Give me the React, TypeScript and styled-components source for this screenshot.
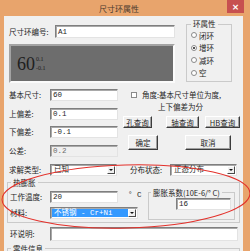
import React from "react";
import styled, { createGlobalStyle } from "styled-components";

const GlobalStyle = createGlobalStyle`
  html, body {
    margin: 0;
    padding: 0;
    background: #ffffff;
  }
  body {
    font-family: "Noto Sans CJK SC", "Noto Sans", sans-serif;
  }
`;

const Window = styled.div`
  position: relative;
  width: 250px;
  height: 251px;
  overflow: hidden;
  background: #e8a46c;
  display: flex;
  flex-direction: column;
`;

const TitleBar = styled.div`
  flex: none;
  height: 16px;
  display: flex;
  align-items: flex-start;
`;

const Title = styled.div`
  flex: 1;
  padding-left: 11px;
  text-align: center;
  font-size: 8px;
  line-height: 17px;
  color: #4a3a2e;
`;

const CloseButton = styled.div`
  width: 17px;
  height: 13px;
  margin-right: 6px;
  background: #c75050;
  color: #ffffff;
  display: flex;
  align-items: center;
  justify-content: center;
  font-family: "DejaVu Sans", sans-serif;
  font-size: 9px;
  font-weight: bold;
`;

const Client = styled.div`
  flex: 1;
  margin: 0 7px 0 4px;
  background: #f0f0f0;
  font-size: 7.5px;
  color: #1e1e1e;
  display: flex;
  flex-direction: column;
`;

const TopRow = styled.div`
  display: flex;
  align-items: flex-start;
  padding-left: 5px;
  gap: 11px;
`;

const Column = styled.div<{ $w: number }>`
  width: ${(p) => p.$w}px;
  flex: none;
  display: flex;
  flex-direction: column;
`;

const FieldRow = styled.div<{ $h?: number; $mt?: number }>`
  display: flex;
  align-items: center;
  height: ${(p) => p.$h ?? 12}px;
  margin-top: ${(p) => p.$mt ?? 0}px;
  flex: none;
`;

const Label = styled.div<{ $w: number; $ml?: number }>`
  width: ${(p) => p.$w}px;
  margin-left: ${(p) => p.$ml ?? 0}px;
  flex: none;
  white-space: nowrap;
  line-height: 10px;
`;

const TextBox = styled.div<{ $w: number; $h?: number; $off?: boolean; $ml?: number }>`
  box-sizing: border-box;
  width: ${(p) => p.$w}px;
  height: ${(p) => p.$h ?? 12}px;
  margin-left: ${(p) => p.$ml ?? 0}px;
  flex: none;
  border: 1px solid;
  border-color: #7f7f7f #e3e3e3 #e3e3e3 #7f7f7f;
  box-shadow: inset 1px 1px 0 #a9a9a9;
  background: ${(p) => (p.$off ? "#f0f0f0" : "#ffffff")};
  color: ${(p) => (p.$off ? "#6d6d6d" : "#1e1e1e")};
  font-family: "Liberation Mono", "Noto Sans CJK SC", monospace;
  font-size: 7.5px;
  line-height: ${(p) => (p.$h ?? 12) - 3}px;
  padding: 1px 0 0 2px;
  white-space: nowrap;
  overflow: hidden;
`;

const DisplayPanel = styled.div`
  box-sizing: border-box;
  margin-top: 6px;
  height: 39px;
  border: 2px solid;
  border-color: #a3a3a3 #fbfbfb #fbfbfb #a3a3a3;
  background: #6d6d6d;
  display: flex;
  align-items: center;
  padding: 1px 0 0 6px;
  font-family: "Liberation Serif", serif;
  color: #202020;
`;

const Nominal = styled.span`
  font-size: 18px;
  line-height: 1;
`;

const TolStack = styled.span`
  display: flex;
  flex-direction: column;
  margin-left: 1px;
  font-size: 6px;
  line-height: 9.5px;
`;

const Group = styled.fieldset<{ $w: number; $h: number; $ml?: number; $mt?: number; $pl?: number }>`
  box-sizing: border-box;
  width: ${(p) => p.$w}px;
  height: ${(p) => p.$h}px;
  margin: ${(p) => p.$mt ?? 0}px 0 0 ${(p) => p.$ml ?? 0}px;
  padding: 0 0 0 ${(p) => p.$pl ?? 0}px;
  border: 1px solid #cacaca;
  flex: none;
  min-width: 0;
`;

const Legend = styled.legend<{ $ml?: number }>`
  margin-left: ${(p) => p.$ml ?? 0}px;
  padding: 0 2px;
  font-size: 7.5px;
  line-height: 10px;
  white-space: nowrap;
`;

const RadioRow = styled.div`
  display: flex;
  align-items: center;
  height: 12.5px;
  gap: 2px;
`;

const RadioDot = styled.span<{ $on?: boolean }>`
  box-sizing: border-box;
  width: 6px;
  height: 6px;
  border-radius: 50%;
  border: 1px solid #8a8a8a;
  background: #ffffff;
  display: flex;
  align-items: center;
  justify-content: center;
  &::after {
    content: "";
    width: 2px;
    height: 2px;
    border-radius: 50%;
    background: ${(p) => (p.$on ? "#1a1a1a" : "transparent")};
  }
`;

const MidRow = styled.div`
  display: flex;
  align-items: flex-start;
  margin-top: 6px;
  padding-left: 5px;
  gap: 5px;
`;

const FieldStack = styled.div`
  width: 109px;
  display: flex;
  flex-direction: column;
  gap: 6.67px;
`;

const CheckLine = styled.div`
  display: flex;
  align-items: flex-start;
  padding-left: 8px;
  gap: 5px;
`;

const CheckBox = styled.span`
  box-sizing: border-box;
  width: 6px;
  height: 6px;
  margin-top: 3px;
  border: 1px solid #8a8a8a;
  background: #ffffff;
  flex: none;
`;

const CheckText = styled.div`
  line-height: 12px;
  white-space: nowrap;
`;

const Indent = styled.div<{ $pl: number }>`
  padding-left: ${(p) => p.$pl}px;
`;

const ButtonRow = styled.div<{ $mt: number }>`
  display: flex;
  margin-top: ${(p) => p.$mt}px;
`;

const Button = styled.div<{ $w: number; $ml?: number; $h?: number }>`
  box-sizing: border-box;
  width: ${(p) => p.$w}px;
  height: ${(p) => p.$h ?? 12}px;
  margin-left: ${(p) => p.$ml ?? 0}px;
  border: 1px solid;
  border-color: #ffffff #3c3c3c #3c3c3c #ffffff;
  box-shadow: inset -1px -1px 0 #a0a0a0;
  background: #f0f0f0;
  display: flex;
  align-items: center;
  justify-content: center;
  white-space: nowrap;
  font-size: 7.5px;
`;

const SelectBox = styled.div<{ $w: number; $h?: number; $ml?: number }>`
  box-sizing: border-box;
  width: ${(p) => p.$w}px;
  height: ${(p) => p.$h ?? 12}px;
  margin-left: ${(p) => p.$ml ?? 0}px;
  flex: none;
  display: flex;
  border: 1px solid;
  border-color: #7f7f7f #e3e3e3 #e3e3e3 #7f7f7f;
  box-shadow: inset 1px 1px 0 #a9a9a9;
  background: #ffffff;
  padding: 1px;
`;

const SelectText = styled.div<{ $hl?: boolean }>`
  flex: 1;
  min-width: 0;
  display: flex;
  align-items: center;
  padding-left: 2px;
  white-space: nowrap;
  font-family: "Liberation Mono", "Noto Sans CJK SC", monospace;
  font-size: 7.5px;
  line-height: 8px;
  background: ${(p) => (p.$hl ? "#3399ff" : "transparent")};
  color: ${(p) => (p.$hl ? "#ffffff" : "#1e1e1e")};
`;

const DropButton = styled.div`
  box-sizing: border-box;
  width: 8px;
  flex: none;
  border: 1px solid;
  border-color: #ffffff #4a4a4a #4a4a4a #ffffff;
  background: #f0f0f0;
  display: flex;
  align-items: center;
  justify-content: center;
  &::after {
    content: "";
    border-left: 2px solid transparent;
    border-right: 2px solid transparent;
    border-top: 2px solid #111111;
  }
`;

const Unit = styled.div<{ $ml: number }>`
  margin-left: ${(p) => p.$ml}px;
  margin-top: -4px;
  font-family: "Liberation Mono", monospace;
  font-size: 7.5px;
  white-space: nowrap;
`;

const GroupBody = styled.div`
  display: flex;
  align-items: flex-start;
`;

const Overlay = styled.svg`
  position: absolute;
  left: 0;
  top: 0;
  pointer-events: none;
`;

const Combo: React.FC<{ w: number; h?: number; ml?: number; text: string; hl?: boolean }> = ({
  w,
  h,
  ml,
  text,
  hl,
}) => (
  <SelectBox $w={w} $h={h} $ml={ml}>
    <SelectText $hl={hl}>{text}</SelectText>
    <DropButton />
  </SelectBox>
);

const App: React.FC = () => {
  const rings = [
    { name: "闭环", on: false },
    { name: "增环", on: true },
    { name: "减环", on: false },
    { name: "空", on: false },
  ];

  return (
    <>
      <GlobalStyle />
      <Window>
        <TitleBar>
          <Title>尺寸环属性</Title>
          <CloseButton>×</CloseButton>
        </TitleBar>
        <Client>
          <TopRow>
            <Column $w={166}>
              <FieldRow $h={13} $mt={9}>
                <Label $w={46}>尺寸环编号:</Label>
                <TextBox $w={120} $h={13}>A1</TextBox>
              </FieldRow>
              <DisplayPanel>
                <Nominal>60</Nominal>
                <TolStack>
                  <span>0.1</span>
                  <span>-0.1</span>
                </TolStack>
              </DisplayPanel>
            </Column>
            <Group $w={46} $h={63} $mt={3} $pl={4}>
              <Legend>环属性</Legend>
              {rings.map((r) => (
                <RadioRow key={r.name}>
                  <RadioDot $on={r.on} />
                  {r.name}
                </RadioRow>
              ))}
            </Group>
          </TopRow>

          <MidRow>
            <FieldStack>
              <FieldRow>
                <Label $w={41}>基本尺寸:</Label>
                <TextBox $w={68}>60</TextBox>
              </FieldRow>
              <FieldRow>
                <Label $w={41}>上偏差:</Label>
                <TextBox $w={68}>0.1</TextBox>
              </FieldRow>
              <FieldRow>
                <Label $w={41}>下偏差:</Label>
                <TextBox $w={68}>-0.1</TextBox>
              </FieldRow>
              <FieldRow>
                <Label $w={41}>公差:</Label>
                <TextBox $w={68} $off>
                  0.2
                </TextBox>
              </FieldRow>
            </FieldStack>
            <Column $w={117}>
              <CheckLine>
                <CheckBox />
                <CheckText>
                  角度:基本尺寸单位为度,
                  <Indent $pl={16}>上下偏差为分</Indent>
                </CheckText>
              </CheckLine>
              <ButtonRow $mt={3}>
                <Button $w={29}>孔查询</Button>
                <Button $w={33} $ml={14}>
                  轴查询
                </Button>
                <Button $w={35} $ml={6}>
                  HB查询
                </Button>
              </ButtonRow>
              <ButtonRow $mt={7}>
                <Button $w={30} $h={15} $ml={5}>
                  确定
                </Button>
                <Button $w={46} $h={15} $ml={27}>
                  取消
                </Button>
              </ButtonRow>
            </Column>
          </MidRow>

          <FieldRow $mt={7}>
            <Label $w={41} $ml={5}>
              求解类型:
            </Label>
            <Combo w={67} text="已知" />
            <Label $w={40} $ml={13}>
              分布状态:
            </Label>
            <Combo w={67} text="正态分布" />
          </FieldRow>

          <Group $w={233} $h={45} $ml={3} $mt={2} $pl={2}>
            <Legend $ml={1}>热膨胀</Legend>
            <GroupBody>
              <Column $w={130}>
                <FieldRow $mt={3}>
                  <Label $w={40}>工作温度:</Label>
                  <TextBox $w={68}>20</TextBox>
                  <Unit $ml={10}>° C</Unit>
                </FieldRow>
                <FieldRow $mt={4}>
                  <Label $w={40}>材料:</Label>
                  <Combo w={88} text="不锈钢 - Cr+Ni" hl />
                </FieldRow>
              </Column>
              <Group $w={87} $h={32} $ml={8}>
                <Legend $ml={2}>膨胀系数(10E-6/° C)</Legend>
                <TextBox $w={55} $ml={27}>
                  16
                </TextBox>
              </Group>
            </GroupBody>
          </Group>

          <FieldRow $h={14} $mt={4}>
            <Label $w={40} $ml={6}>
              环说明:
            </Label>
            <TextBox $w={188} $h={14} />
          </FieldRow>

          <Group $w={233} $h={40} $ml={3} $mt={3} $pl={2}>
            <Legend $ml={1}>零件信息</Legend>
          </Group>
        </Client>

        <Overlay width={250} height={251} viewBox="0 0 250 251">
          <ellipse
            cx={126}
            cy={196.5}
            rx={124}
            ry={31.5}
            transform="rotate(-1.5 126 196.5)"
            fill="none"
            stroke="#e3302a"
            strokeWidth={1}
          />
        </Overlay>
      </Window>
    </>
  );
};

export default App;
